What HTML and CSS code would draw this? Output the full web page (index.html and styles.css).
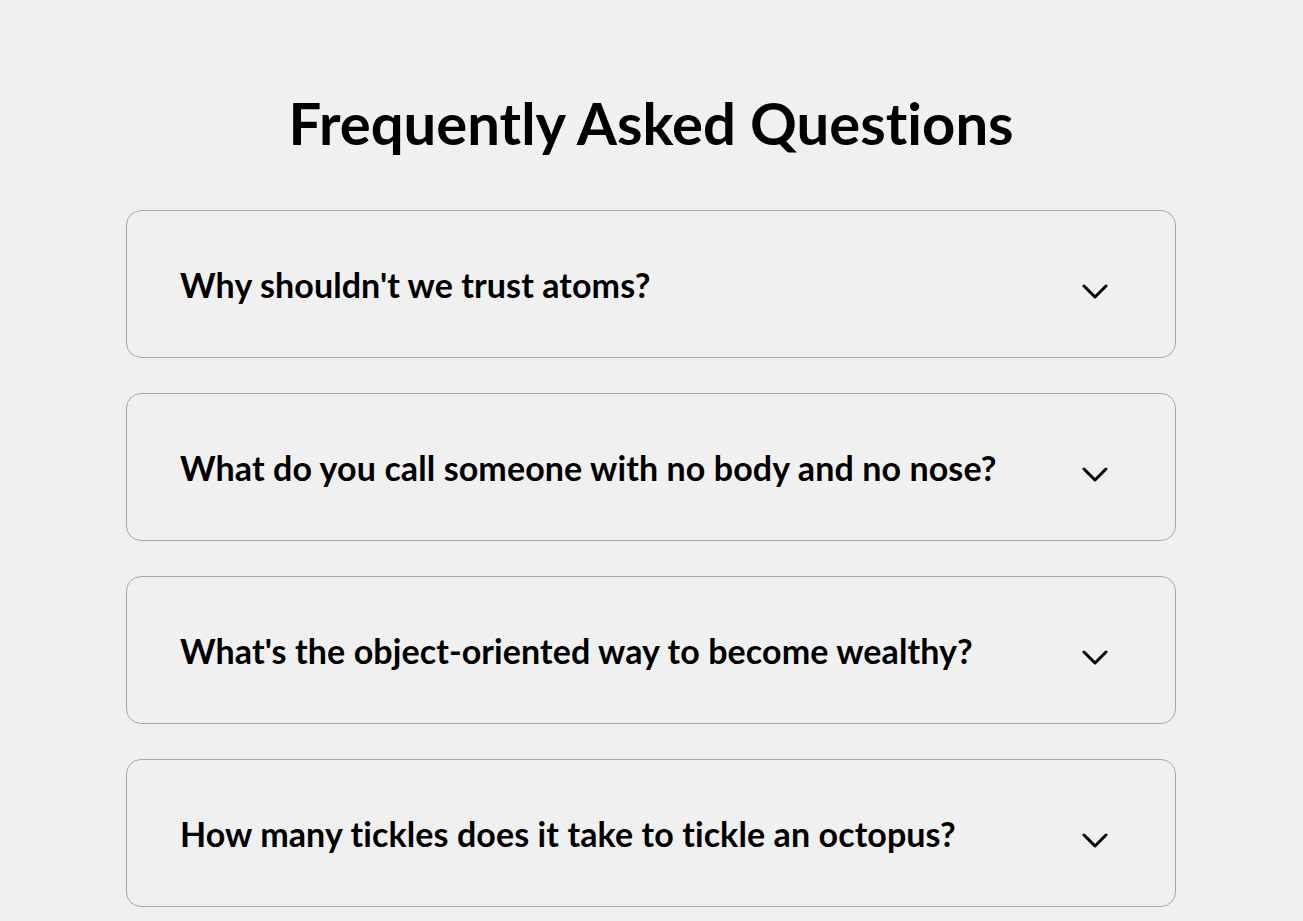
FILE: index.html
```html
<!DOCTYPE html>
<html lang="en">
<head>
<meta charset="utf-8">
<title>FAQ</title>
<link rel="stylesheet" href="styles.css">
</head>
<body>
<main class="faq">
  <h1 class="faq-title">Frequently Asked Questions</h1>
  <div class="faq-list">
    <div class="faq-item">
      <h3 class="faq-question">Why shouldn't we trust atoms?</h3>
      <svg class="chevron" viewBox="0 0 26 15" width="26" height="15"><path d="M2 2 L13 13 L24 2" fill="none" stroke="#000" stroke-width="3" stroke-linecap="round" stroke-linejoin="round"/></svg>
    </div>
    <div class="faq-item">
      <h3 class="faq-question">What do you call someone with no body and no nose?</h3>
      <svg class="chevron" viewBox="0 0 26 15" width="26" height="15"><path d="M2 2 L13 13 L24 2" fill="none" stroke="#000" stroke-width="3" stroke-linecap="round" stroke-linejoin="round"/></svg>
    </div>
    <div class="faq-item">
      <h3 class="faq-question">What's the object-oriented way to become wealthy?</h3>
      <svg class="chevron" viewBox="0 0 26 15" width="26" height="15"><path d="M2 2 L13 13 L24 2" fill="none" stroke="#000" stroke-width="3" stroke-linecap="round" stroke-linejoin="round"/></svg>
    </div>
    <div class="faq-item">
      <h3 class="faq-question">How many tickles does it take to tickle an octopus?</h3>
      <svg class="chevron" viewBox="0 0 26 15" width="26" height="15"><path d="M2 2 L13 13 L24 2" fill="none" stroke="#000" stroke-width="3" stroke-linecap="round" stroke-linejoin="round"/></svg>
    </div>
  </div>
</main>
</body>
</html>
```

FILE: styles.css
```css
* { box-sizing: border-box; }
html, body { margin: 0; padding: 0; }
body {
  background: #f0f0f0;
  font-family: Lato, "Open Sans", sans-serif;
  color: #000;
  font-variant-ligatures: none;
  padding-right: 1px;
}
.faq {
  width: 1050px;
  margin: 0 auto;
  padding-top: 86px;
}
.faq-title {
  margin: 0 0 50px;
  text-align: center;
  font-size: 58px;
  font-weight: 700;
  line-height: 74px;
}
.faq-list {
  display: flex;
  flex-direction: column;
  gap: 35px;
}
.faq-item {
  height: 148px;
  border: 1px solid #a8a8a8;
  border-radius: 15px;
  display: flex;
  align-items: center;
  justify-content: space-between;
  padding: 0 67px 0 53px;
}
.faq-question {
  margin: 0;
  font-size: 34px;
  font-weight: 700;
  letter-spacing: 0.1px;
}
.chevron { display: block; margin-top: 14px; }
```
